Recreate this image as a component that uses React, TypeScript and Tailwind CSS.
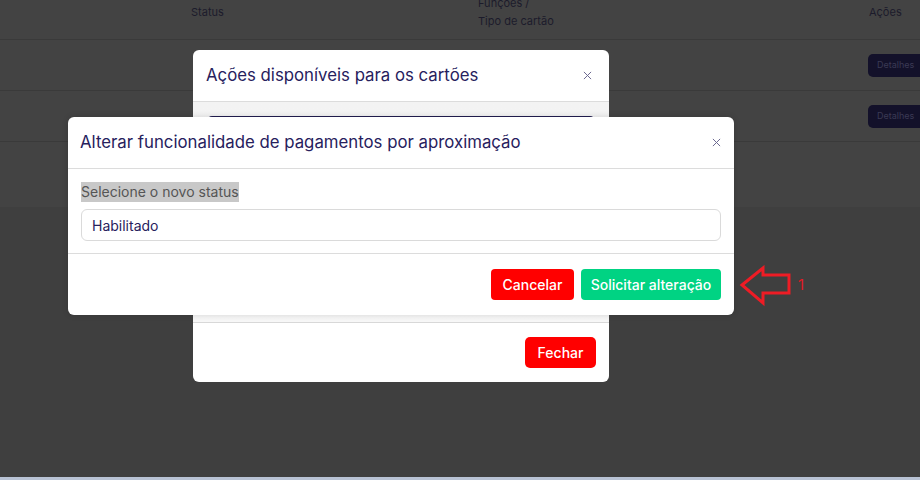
import React from 'react';

const font = { fontFamily: 'Inter, "Noto Sans", sans-serif' };

const CloseX = ({ className }: { className?: string }) => (
  <svg width="9" height="9" viewBox="0 0 10 10" className={className}>
    <path d="M1 1 L9 9 M9 1 L1 9" stroke="currentColor" strokeWidth="1.1" />
  </svg>
);

const App: React.FC = () => {
  return (
    <div className="relative w-[920px] h-[480px] overflow-hidden bg-[#3f3f3f]" style={font}>
      {/* Table behind the overlay */}
      <div className="bg-[#434343]">
        <div className="flex h-[40px] text-[11px] text-[#1c1b2b] border-b border-[#3a3a3a]">
          <div className="w-[191px]" />
          <div className="w-[287px] pt-[4px]">Status</div>
          <div className="w-[391px] leading-[18px] -mt-[6px]">
            <div>Funções /</div>
            <div>Tipo de cartão</div>
          </div>
          <div className="pt-[4px]">Ações</div>
        </div>
        {[0, 1].map((i) => (
          <div key={i} className="flex h-[51px] items-center border-b border-[#3a3a3a]">
            <div className="ml-auto w-[52px] h-[23px] rounded-l-[5px] bg-[#13112a] text-[9px] text-[#3b3a55] flex items-center pl-[9px]">
              Detalhes
            </div>
          </div>
        ))}
        <div className="h-[65px]" />
      </div>

      {/* Back modal */}
      <div className="absolute left-[193px] top-[50px] w-[416px] h-[332px] bg-white rounded-[6px] flex flex-col overflow-hidden">
        <div className="h-[52px] flex items-center justify-between px-[13px] border-b border-[#dcdcdc]">
          <span className="text-[16.8px] text-[#27215d]">Ações disponíveis para os cartões</span>
          <CloseX className="text-[#6b6890] mr-[4px]" />
        </div>
        <div className="flex-1 bg-gradient-to-b from-[#f3f3f3] to-[#f7f7f7] px-[15px] pt-[14px] border-b border-[#d8d8d8]">
          <div className="h-[30px] rounded-[4px] bg-[#231e52]" />
        </div>
        <div className="h-[59px] flex items-center justify-end px-[13px]">
          <button className="h-[31px] w-[71px] rounded-[5px] bg-[#ff0000] text-white text-[14px] font-medium">Fechar</button>
        </div>
      </div>

      {/* Front modal */}
      <div className="absolute left-[68px] top-[117px] w-[666px] h-[198px] bg-white rounded-[6px] flex flex-col shadow-[0_0_6px_rgba(0,0,0,0.15)]">
        <div className="h-[52px] flex items-center justify-between pl-[12px] pr-[13px] border-b border-[#dcdcdc]">
          <span className="text-[16.8px] text-[#27215d]">Alterar funcionalidade de pagamentos por aproximação</span>
          <CloseX className="text-[#6b6890]" />
        </div>
        <div className="px-[13px] pt-[13px] pb-[12px] border-b border-[#dcdcdc]">
          <span className="block w-fit bg-[#c8c8c8] text-[#555555] text-[14px] leading-[20px]">Selecione o novo status</span>
          <div className="mt-[7px] h-[32px] rounded-[6px] border border-[#dadada] flex items-center px-[10px] text-[14px] text-[#27215d]">
            Habilitado
          </div>
        </div>
        <div className="flex-1 flex items-center justify-end gap-[7px] px-[13px]">
          <button className="h-[31px] w-[83px] rounded-[4px] bg-[#ff0000] text-white text-[14px] font-medium">Cancelar</button>
          <button className="h-[31px] w-[140px] rounded-[4px] bg-[#00d383] text-white text-[14px] font-medium">Solicitar alteração</button>
        </div>
      </div>

      {/* Annotation arrow */}
      <svg className="absolute left-[738px] top-[265px]" width="56" height="42" viewBox="0 0 56 42">
        <path d="M4 20 L25 3 L25 10 L51 10 L51 28 L25 28 L25 38 Z" fill="none" stroke="#ee1c25" strokeWidth="3" strokeLinejoin="miter" />
      </svg>
      <span className="absolute left-[798px] top-[274px] text-[15px] text-[#e21b24]">1</span>

      <div className="absolute left-0 bottom-0 w-full h-[3px] bg-[#b8c2d4]" />
    </div>
  );
};

export default App;
